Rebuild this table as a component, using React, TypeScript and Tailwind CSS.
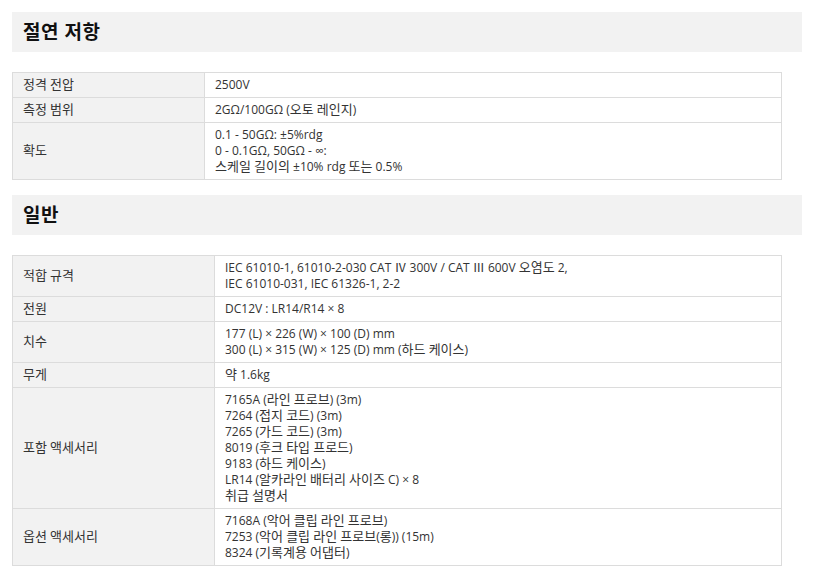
import React from "react";

type Row = { label: string; lines: string[] };

const insulation: Row[] = [
  { label: "정격 전압", lines: ["2500V"] },
  { label: "측정 범위", lines: ["2GΩ/100GΩ (오토 레인지)"] },
  {
    label: "확도",
    lines: ["0.1 - 50GΩ: ±5%rdg", "0 - 0.1GΩ, 50GΩ - ∞:", "스케일 길이의 ±10% rdg 또는 0.5%"],
  },
];

const general: Row[] = [
  {
    label: "적합 규격",
    lines: [
      "IEC 61010-1, 61010-2-030 CAT Ⅳ 300V / CAT Ⅲ 600V 오염도 2,",
      "IEC 61010-031, IEC 61326-1, 2-2",
    ],
  },
  { label: "전원", lines: ["DC12V : LR14/R14 × 8"] },
  {
    label: "치수",
    lines: ["177 (L) × 226 (W) × 100 (D) mm", "300 (L) × 315 (W) × 125 (D) mm (하드 케이스)"],
  },
  { label: "무게", lines: ["약 1.6kg"] },
  {
    label: "포함 액세서리",
    lines: [
      "7165A (라인 프로브) (3m)",
      "7264 (접지 코드) (3m)",
      "7265 (가드 코드) (3m)",
      "8019 (후크 타입 프로드)",
      "9183 (하드 케이스)",
      "LR14 (알카라인 배터리 사이즈 C) × 8",
      "취급 설명서",
    ],
  },
  {
    label: "옵션 액세서리",
    lines: [
      "7168A (악어 클립 라인 프로브)",
      "7253 (악어 클립 라인 프로브(롱)) (15m)",
      "8324 (기록계용 어댑터)",
    ],
  },
];

// hangul runs are set a touch larger so they sit as wide as the latin text around them
function Mixed({ text }: { text: string }) {
  const parts = text.split(/([\uac00-\ud7a3]+)/);
  return (
    <>
      {parts.map((p, i) =>
        /[\uac00-\ud7a3]/.test(p) ? (
          <span key={i} className="text-[13px] leading-3">
            {p}
          </span>
        ) : (
          <React.Fragment key={i}>{p}</React.Fragment>
        )
      )}
    </>
  );
}

function SectionTitle({ title }: { title: string }) {
  return (
    <div className="h-10 bg-[#f2f2f2] flex items-center px-[11px]">
      <h2 className="text-[19px] font-bold text-[#111] tracking-[0.5px]">{title}</h2>
    </div>
  );
}

function SpecTable({ rows, labelWidth }: { rows: Row[]; labelWidth: string }) {
  return (
    <table className="w-[770px] table-fixed border-collapse text-[12px] leading-4 text-[#333]">
      <colgroup>
        <col className={labelWidth} />
        <col />
      </colgroup>
      <tbody>
        {rows.map((row) => (
          <tr key={row.label}>
            <td className="border border-[#dcdcdc] bg-[#f2f2f2] px-[10px] py-1 align-middle whitespace-nowrap">
              <div className="h-4">
                <Mixed text={row.label} />
              </div>
            </td>
            <td className="border border-[#dcdcdc] px-[10px] py-1 align-middle">
              {row.lines.map((line, i) => (
                <div key={i} className="h-4 whitespace-nowrap">
                  <Mixed text={line} />
                </div>
              ))}
            </td>
          </tr>
        ))}
      </tbody>
    </table>
  );
}

export default function App() {
  return (
    <div
      className="bg-white min-h-[582px] px-3 pt-3"
      style={{ fontFamily: '"Open Sans", "Noto Sans CJK KR", sans-serif' }}
    >
      <div className="w-[790px]">
        <SectionTitle title="절연 저항" />
        <div className="mt-5">
          <SpecTable rows={insulation} labelWidth="w-[192px]" />
        </div>

        <div className="mt-[15px]">
          <SectionTitle title="일반" />
        </div>
        <div className="mt-5">
          <SpecTable rows={general} labelWidth="w-[202px]" />
        </div>
      </div>
    </div>
  );
}
